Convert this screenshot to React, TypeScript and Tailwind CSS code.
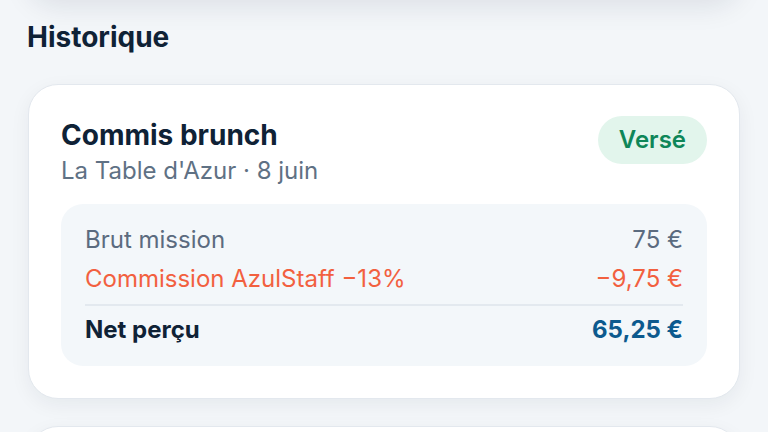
import React from 'react'

const rows = [
  { label: 'Brut mission', value: '75 €', tone: 'text-[#5b6b7f]' },
  { label: 'Commission AzulStaff −13%', value: '−9,75 €', tone: 'text-[#f2603f]' }
]

export default function App() {
  return (
    <div
      className="h-[432px] overflow-hidden bg-[#f3f6f9] text-[#0f2236]"
      style={{ fontFamily: 'Inter, "Noto Sans", sans-serif' }}
    >
      {/* bottom of the card above, cut off by the viewport */}
      <div className="mx-[28px] -mt-[40px] h-[40px] rounded-b-[28px] bg-white shadow-[0_6px_28px_rgba(15,34,54,0.10)]" />

      <h2 className="mt-[17px] px-[27px] text-[28px] font-bold leading-[40px] text-[#0f2236]">
        Historique
      </h2>

      <div className="mx-[28px] mt-[27px] rounded-[30px] border border-[#e3e8ee] bg-white px-[32px] pt-[32px] pb-[32px] shadow-[0_6px_20px_rgba(15,34,54,0.06)]">
        <div className="flex items-start justify-between">
          <div className="flex flex-col">
            <div className="text-[28px] font-bold leading-[36px]">Commis brunch</div>
            <div className="mt-[2px] text-[24px] leading-[32px] text-[#5f7184]">La Table d'Azur · 8 juin</div>
          </div>
          <div className="mt-[-1px] flex h-[48px] items-center rounded-full bg-[#e2f5ec] px-[21px] text-[24px] font-semibold text-[#0e8658]">
            Versé
          </div>
        </div>

        <div className="mt-[17px] rounded-[22px] bg-[#f3f7fa] px-[24px] pt-[21px] pb-[21px]">
          <div className="flex flex-col gap-[9px]">
            {rows.map((r) => (
              <div key={r.label} className={`flex justify-between text-[24px] leading-[30px] ${r.tone}`}>
                <span>{r.label}</span>
                <span>{r.value}</span>
              </div>
            ))}
          </div>
          <div className="mt-[10px] mb-[9px] h-[2px] bg-[#e3e9ef]" />
          <div className="flex justify-between text-[24px] font-bold leading-[30px]">
            <span className="text-[#0f2236]">Net perçu</span>
            <span className="text-[#0c5a8e]">65,25 €</span>
          </div>
        </div>
      </div>

      <div className="mx-[28px] mt-[27px] h-[80px] rounded-t-[30px] border border-[#e3e8ee] bg-white shadow-[0_6px_20px_rgba(15,34,54,0.06)]" />
    </div>
  )
}
